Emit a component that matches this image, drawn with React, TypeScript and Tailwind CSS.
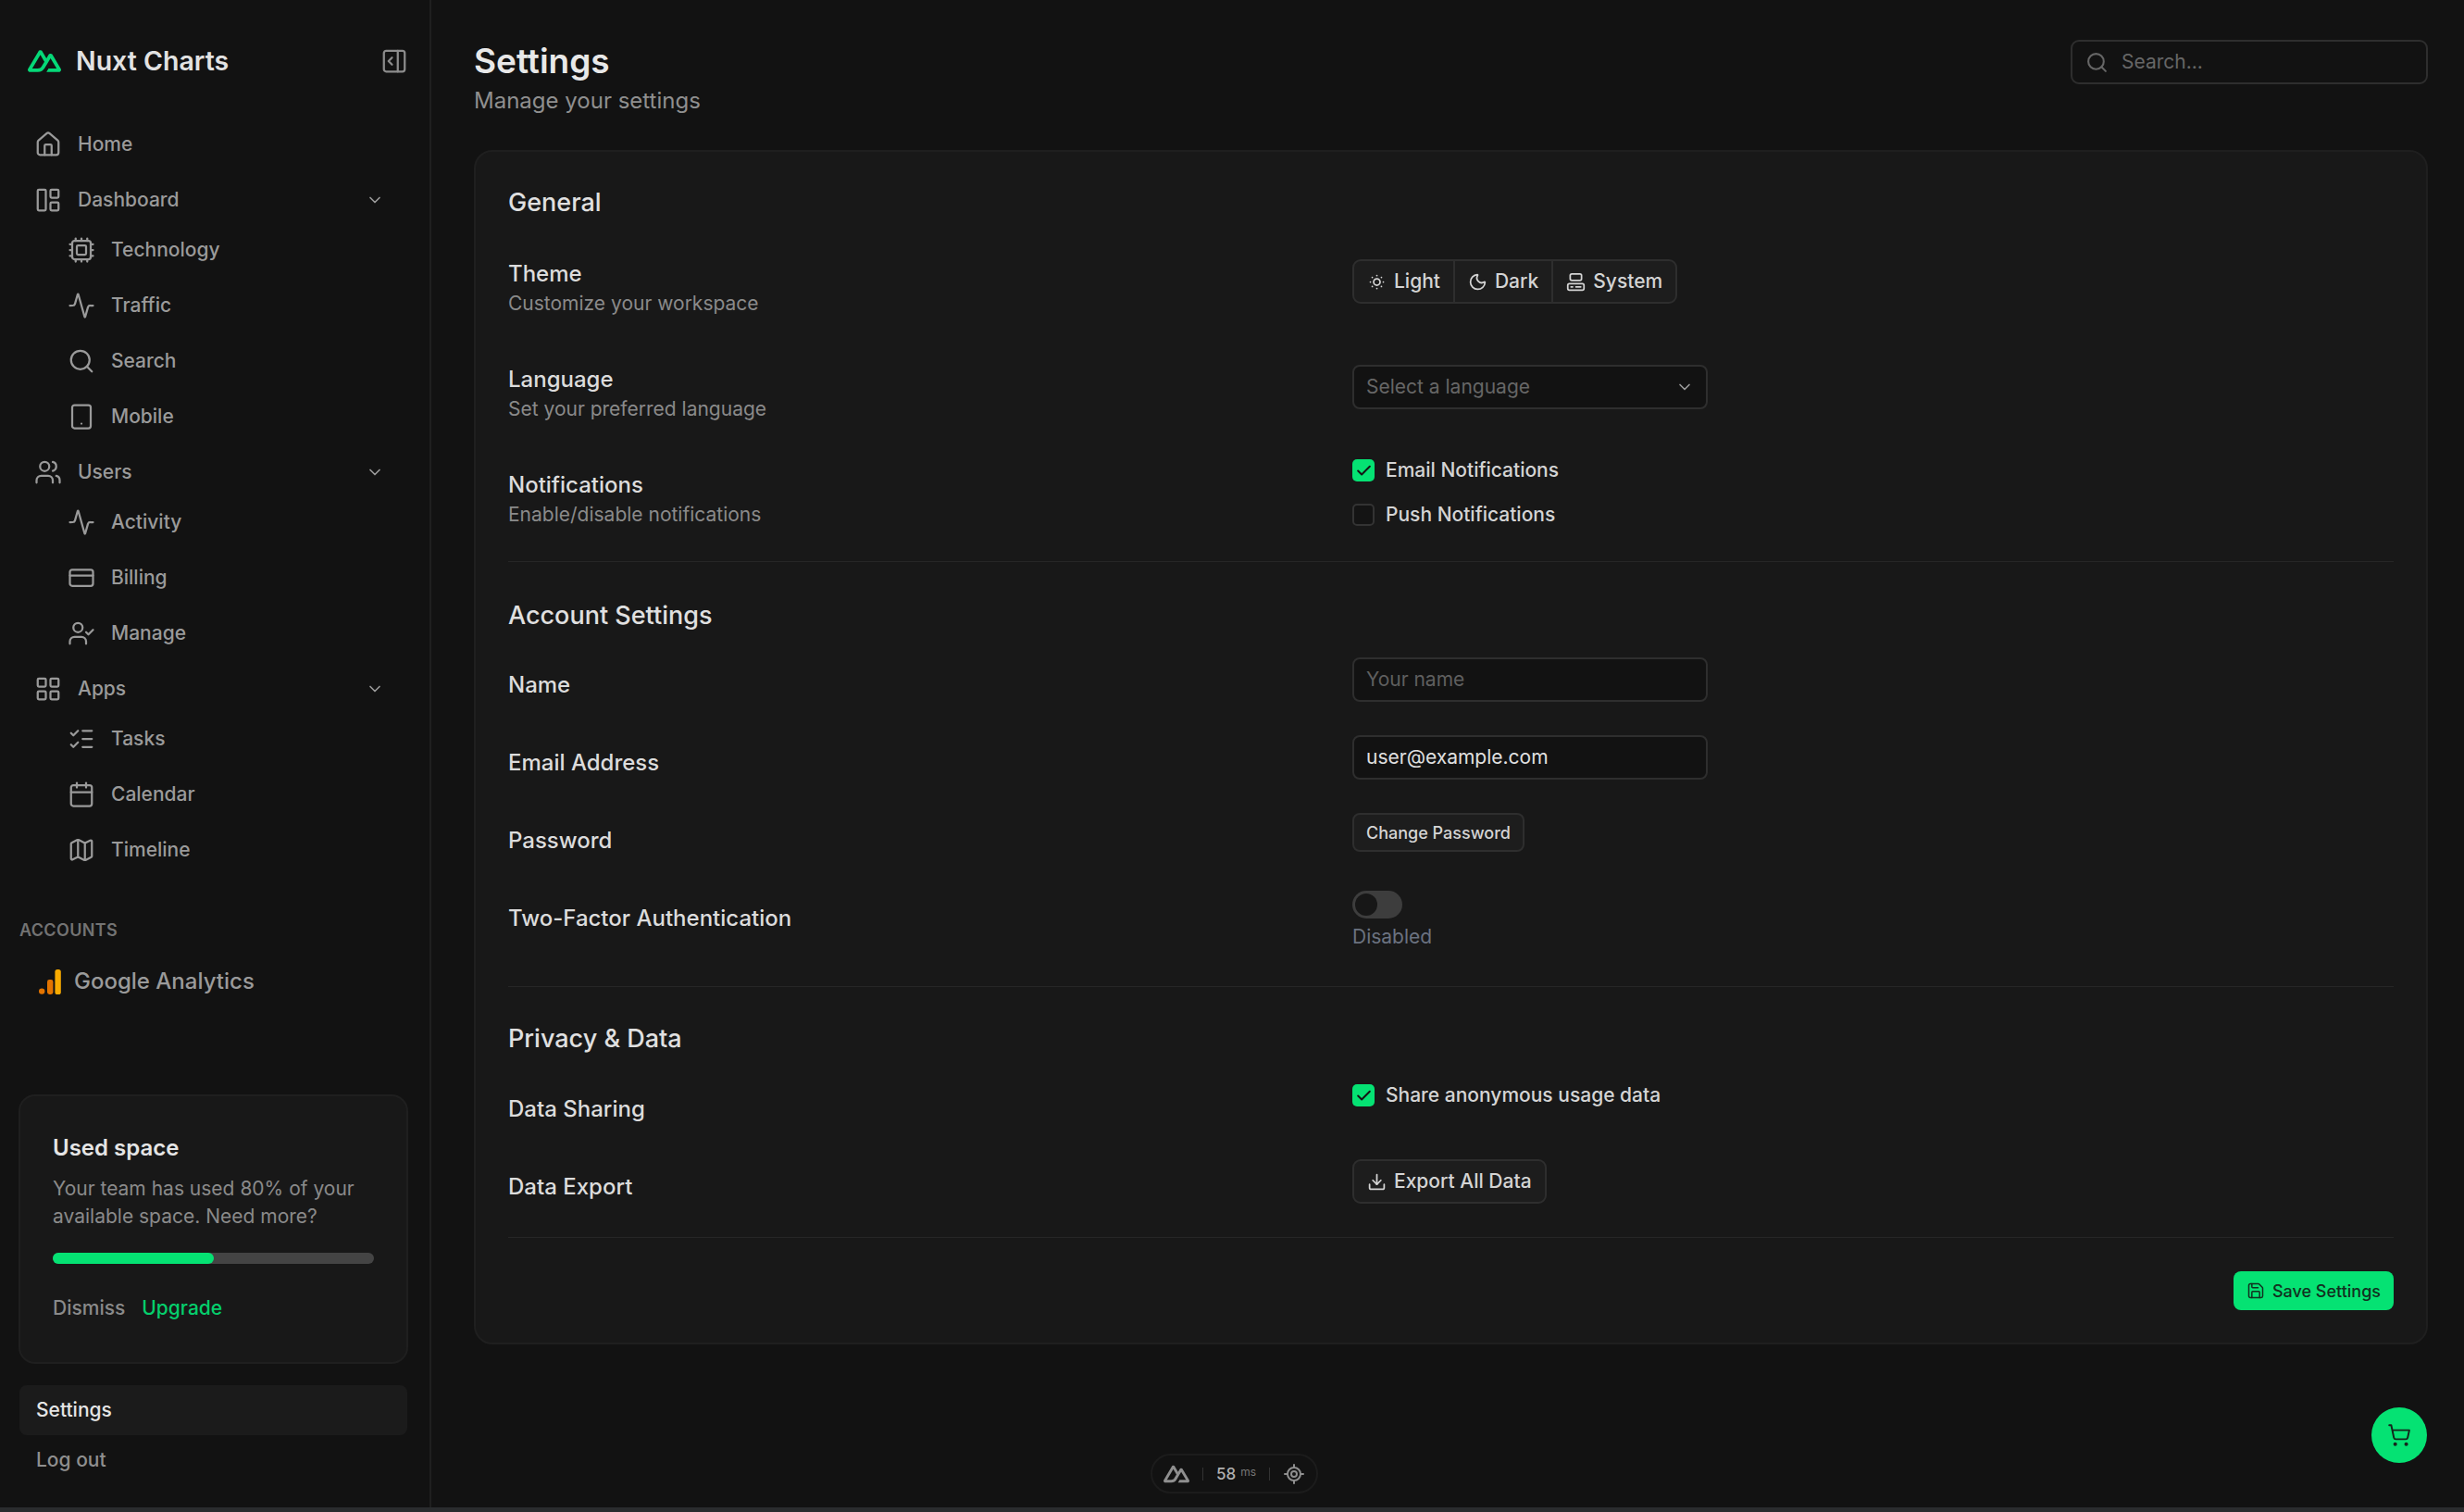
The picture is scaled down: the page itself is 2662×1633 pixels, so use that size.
import {
  Activity,
  Calendar,
  Check,
  ChevronDown,
  Computer,
  CreditCard,
  Cpu,
  Download,
  Home,
  LayoutGrid,
  LayoutPanelLeft,
  ListChecks,
  LocateFixed,
  Map as MapIcon,
  Moon,
  PanelRightOpen,
  Save,
  Search,
  ShoppingCart,
  SunDim,
  Tablet,
  UserCheck,
  Users,
} from 'lucide-react';
import type { ComponentType, ReactNode } from 'react';

type Icon = ComponentType<{ className?: string; strokeWidth?: number }>;

const NAV: { label: string; icon: Icon; children?: { label: string; icon: Icon }[] }[] = [
  { label: 'Home', icon: Home },
  {
    label: 'Dashboard',
    icon: LayoutPanelLeft,
    children: [
      { label: 'Technology', icon: Cpu },
      { label: 'Traffic', icon: Activity },
      { label: 'Search', icon: Search },
      { label: 'Mobile', icon: Tablet },
    ],
  },
  {
    label: 'Users',
    icon: Users,
    children: [
      { label: 'Activity', icon: Activity },
      { label: 'Billing', icon: CreditCard },
      { label: 'Manage', icon: UserCheck },
    ],
  },
  {
    label: 'Apps',
    icon: LayoutGrid,
    children: [
      { label: 'Tasks', icon: ListChecks },
      { label: 'Calendar', icon: Calendar },
      { label: 'Timeline', icon: MapIcon },
    ],
  },
];

function NuxtLogo({ className }: { className?: string }) {
  return (
    <svg className={className} viewBox="0 0 24 24" fill="currentColor">
      <path d="M13.4642 19.8295h8.9218c.2834 0 .5618-.0723.8072-.2098a1.5899 1.5899 0 0 0 .5908-.5732 1.5293 1.5293 0 0 0 .216-.783 1.529 1.529 0 0 0-.2167-.7828L17.7916 7.4142a1.5904 1.5904 0 0 0-.5907-.573 1.6524 1.6524 0 0 0-.807-.2099c-.2833 0-.5616.0724-.807.21a1.5904 1.5904 0 0 0-.5907.5731L13.4642 9.99l-2.9954-5.0366a1.5913 1.5913 0 0 0-.591-.573 1.6533 1.6533 0 0 0-.8071-.2098c-.2834 0-.5617.0723-.8072.2097a1.5913 1.5913 0 0 0-.591.573L.2168 17.4808A1.5292 1.5292 0 0 0 0 18.2635c-.0001.2749.0744.545.216.783a1.59 1.59 0 0 0 .5908.5732c.2454.1375.5238.2098.8072.2098h5.6003c2.219 0 3.8554-.9454 4.9813-2.7899l2.7337-4.5922L16.3935 9.99l4.3944 7.382h-5.8586ZM7.123 17.3694l-3.9083-.0009 5.8586-9.8421 2.9232 4.921-1.9572 3.2892c-.7478 1.1967-1.5972 1.6328-2.9163 1.6328z" />
    </svg>
  );
}

function AnalyticsLogo() {
  return (
    <svg className="h-[27px] w-[24px] shrink-0" viewBox="0 0 24 27">
      <circle cx="3.2" cy="23.6" r="3.2" fill="#e37400" />
      <rect x="9" y="11" width="6.4" height="16" rx="2.4" fill="#e37400" />
      <rect x="17.4" y="0" width="6.4" height="27" rx="2.6" fill="#f9ab00" />
    </svg>
  );
}

function Label({ title, hint, className }: { title: string; hint?: string; className?: string }) {
  return (
    <div className={className}>
      <div className="text-[24px] font-medium leading-[32px] text-[#dcdcdc]">{title}</div>
      {hint && <div className="text-[21px] leading-[32px] text-[#8a8a8a]">{hint}</div>}
    </div>
  );
}

function Row({ className, label, children }: { className?: string; label: ReactNode; children: ReactNode }) {
  return (
    <div className={`grid grid-cols-[912px_1fr] ${className ?? ''}`}>
      {label}
      <div>{children}</div>
    </div>
  );
}

function CheckItem({ checked, label }: { checked?: boolean; label: string }) {
  return (
    <div className="flex h-[24px] items-center gap-[12px]">
      {checked ? (
        <span className="flex size-[24px] items-center justify-center rounded-[5px] bg-[#05e273]">
          <Check className="size-[19px] text-[#141414]" strokeWidth={2.5} />
        </span>
      ) : (
        <span className="size-[24px] rounded-[5px] border-2 border-[#333] bg-[#141414]" />
      )}
      <span className="text-[21px] font-medium leading-[32px] text-[#d4d4d4]">{label}</span>
    </div>
  );
}

function Heading({ children, className }: { children: ReactNode; className?: string }) {
  return <h2 className={`text-[27px] font-medium leading-[40px] text-[#e0e0e0] ${className ?? ''}`}>{children}</h2>;
}

function Divider({ className }: { className?: string }) {
  return <div className={`h-[1px] bg-[#262626] ${className ?? ''}`} />;
}

const inputBox = 'flex h-[48px] w-[384px] items-center rounded-[8px] border-2 border-[#2e2e2e] bg-[#121212] px-[13px] text-[21px]';

function Sidebar() {
  return (
    <aside className="flex w-[466px] shrink-0 flex-col border-r-2 border-[#1f1f1f] pb-[24px]">
      <div className="h-[129px] pt-[48px] pl-[30px] pr-[23px]">
        <div className="flex h-[36px] items-center justify-between">
          <div className="flex items-center gap-[16px]">
            <NuxtLogo className="size-[36px] text-[#05d877]" />
            <span className="text-[28.5px] font-semibold leading-[36px] text-[#e2e2e2]">Nuxt Charts</span>
          </div>
          <PanelRightOpen className="size-[30px] text-[#8c8c8c]" strokeWidth={1.8} />
        </div>
      </div>

      <nav className="flex flex-col gap-[6px] pl-[37px] pr-[38px]">
        {NAV.map((item) => (
          <div key={item.label} className="flex flex-col">
            <div className="flex h-[54px] items-center text-[#9a9a9a]">
              <item.icon className="size-[30px] shrink-0" strokeWidth={1.8} />
              <span className="ml-[17px] flex-1 text-[21px] font-medium">{item.label}</span>
              {item.children && <ChevronDown className="mr-[11px] size-[20px]" />}
            </div>
            {item.children && (
              <div className="flex flex-col gap-[6px] pl-[36px]">
                {item.children.map((child) => (
                  <div key={child.label} className="flex h-[54px] items-center text-[#9a9a9a]">
                    <child.icon className="size-[30px] shrink-0" strokeWidth={1.8} />
                    <span className="ml-[17px] text-[21px] font-medium">{child.label}</span>
                  </div>
                ))}
              </div>
            )}
          </div>
        ))}
      </nav>

      <div className="mt-[46px] pl-[21px] text-[18px] font-semibold leading-[28px] tracking-[0.02em] text-[#737373]">ACCOUNTS</div>
      <div className="mt-[14px] flex h-[54px] items-center gap-[14px] pl-[42px] text-[24px] font-medium text-[#9a9a9a]">
        <AnalyticsLogo />
        Google Analytics
      </div>

      <div className="mt-auto ml-[20px] mr-[23px] rounded-[18px] border-2 border-[#1f1f1f] bg-[#181818] px-[35px] pt-[37px] pb-[42px]">
        <div className="text-[24px] font-semibold leading-[38px] text-[#e5e5e5]">Used space</div>
        <p className="mt-[10px] text-[21px] leading-[30px] text-[#8a8a8a]">Your team has used 80% of your available space. Need more?</p>
        <div className="mt-[24px] h-[12px] w-full rounded-full bg-[#444]">
          <div className="h-full w-1/2 rounded-full bg-[#05e273]" />
        </div>
        <div className="mt-[32px] flex gap-[18px] text-[21px] font-medium leading-[32px]">
          <span className="text-[#8a8a8a]">Dismiss</span>
          <span className="text-[#05cf6c]">Upgrade</span>
        </div>
      </div>

      <div className="mt-[23px] ml-[21px] mr-[24px] flex h-[54px] items-center rounded-[8px] bg-[#1b1b1b] px-[18px] text-[21px] font-medium text-[#e5e5e5]">Settings</div>
      <div className="ml-[21px] mr-[24px] flex h-[54px] items-center px-[18px] text-[21px] font-medium text-[#8f8f8f]">Log out</div>
    </aside>
  );
}

function SettingsCard() {
  return (
    <section className="rounded-[20px] border-2 border-[#1f1f1f] bg-[#181818] px-[35px] pt-[35px] pb-[35px]">
      <Heading>General</Heading>

      <Row className="mt-[41px]" label={<Label title="Theme" hint="Customize your workspace" />}>
        <div className="inline-flex h-[48px] divide-x-2 divide-[#2e2e2e] rounded-[9px] border-2 border-[#2e2e2e] bg-[#1d1d1d] text-[21px] font-medium text-[#d4d4d4]">
          <span className="flex items-center gap-[8px] px-[14px]"><SunDim className="size-[21px]" />Light</span>
          <span className="flex items-center gap-[8px] px-[14px]"><Moon className="size-[21px]" />Dark</span>
          <span className="flex items-center gap-[8px] px-[14px]"><Computer className="size-[21px]" />System</span>
        </div>
      </Row>

      <Row className="mt-[50px]" label={<Label title="Language" hint="Set your preferred language" />}>
        <div className={`${inputBox} justify-between text-[#666]`}>
          Select a language
          <ChevronDown className="size-[20px] text-[#9a9a9a]" />
        </div>
      </Row>

      <Row className="mt-[38px]" label={<Label className="pt-[12px]" title="Notifications" hint="Enable/disable notifications" />}>
        <div className="flex flex-col gap-[24px]">
          <CheckItem checked label="Email Notifications" />
          <CheckItem label="Push Notifications" />
        </div>
      </Row>

      <Divider className="mt-[34px]" />
      <Heading className="mt-[38px]">Account Settings</Heading>

      <Row className="mt-[25px]" label={<Label className="pt-[14px]" title="Name" />}>
        <div className={`${inputBox} text-[#5f5f5f]`}>Your name</div>
      </Row>
      <Row className="mt-[36px]" label={<Label className="pt-[14px]" title="Email Address" />}>
        <div className={`${inputBox} text-[#e0e0e0]`}>user@example.com</div>
      </Row>
      <Row className="mt-[36px]" label={<Label className="pt-[14px]" title="Password" />}>
        <div className="inline-flex h-[42px] items-center rounded-[8px] border-2 border-[#2e2e2e] bg-[#1d1d1d] px-[13px] text-[18px] font-medium text-[#d4d4d4]">Change Password</div>
      </Row>
      <Row className="mt-[38px]" label={<Label className="pt-[14px]" title="Two-Factor Authentication" />}>
        <div className="flex h-[30px] w-[54px] items-center rounded-full bg-[#3d3d3d] pl-[3px]">
          <span className="size-[24px] rounded-full bg-[#171717]" />
        </div>
        <div className="mt-[4px] text-[21px] leading-[32px] text-[#6b7280]">Disabled</div>
      </Row>

      <Divider className="mt-[37px]" />
      <Heading className="mt-[36px]">Privacy &amp; Data</Heading>

      <Row className="mt-[29px]" label={<Label className="pt-[11px]" title="Data Sharing" />}>
        <CheckItem checked label="Share anonymous usage data" />
      </Row>
      <Row className="mt-[38px]" label={<Label className="pt-[14px]" title="Data Export" />}>
        <div className="inline-flex h-[48px] items-center gap-[8px] rounded-[9px] border-2 border-[#2e2e2e] bg-[#1d1d1d] px-[14px] text-[21px] font-medium text-[#d4d4d4]">
          <Download className="size-[21px]" />
          Export All Data
        </div>
      </Row>

      <Divider className="mt-[36px]" />
      <div className="mt-[36px] flex justify-end">
        <div className="flex h-[42px] items-center gap-[8px] rounded-[8px] bg-[#05e273] px-[14px] text-[18px] font-medium text-[#12301f]">
          <Save className="size-[20px]" strokeWidth={1.8} />
          Save Settings
        </div>
      </div>
    </section>
  );
}

export default function App() {
  return (
    <div className="relative flex h-screen w-full flex-col overflow-hidden bg-[#121212] font-['Inter',sans-serif]">
      <div className="flex min-h-0 flex-1">
        <Sidebar />
        <main className="flex-1 pt-[41px] pr-[39px] pl-[46px]">
          <header className="flex items-start justify-between">
            <div>
              <h1 className="text-[37px] font-semibold leading-[50px] text-[#e8e8e8]">Settings</h1>
              <p className="mt-[1px] text-[24px] leading-[34px] text-[#8f8f8f]">Manage your settings</p>
            </div>
            <div className="mt-[2px] flex h-[48px] w-[386px] items-center gap-[14px] rounded-[9px] border-2 border-[#2e2e2e] px-[14px] text-[21px] text-[#666]">
              <Search className="size-[25px]" />
              Search...
            </div>
          </header>
          <div className="mt-[36px]">
            <SettingsCard />
          </div>
        </main>
      </div>
      <div className="h-[5px] shrink-0 bg-[#2a2c2e]" />

      {/* devtools pill */}
      <div className="absolute bottom-[20px] left-[1243px] flex h-[43px] w-[181px] items-center justify-between rounded-full border-2 border-[#1c1c1c] px-[12px] text-[#8f8f8f]">
        <NuxtLogo className="size-[28px]" />
        <span className="h-[14px] w-[1px] bg-[#333]" />
        <span className="flex items-start gap-[5px] text-[17px] font-medium leading-[20px] text-[#b0b0b0]">
          58 <span className="text-[12px] font-normal leading-[16px] text-[#777]">ms</span>
        </span>
        <span className="h-[14px] w-[1px] bg-[#333]" />
        <LocateFixed className="size-[24px]" />
      </div>

      {/* cart button */}
      <div className="absolute right-[40px] bottom-[53px] flex size-[60px] items-center justify-center rounded-full bg-[#05e273] text-[#14261c]">
        <ShoppingCart className="size-[26px]" strokeWidth={1.8} />
      </div>
    </div>
  );
}
